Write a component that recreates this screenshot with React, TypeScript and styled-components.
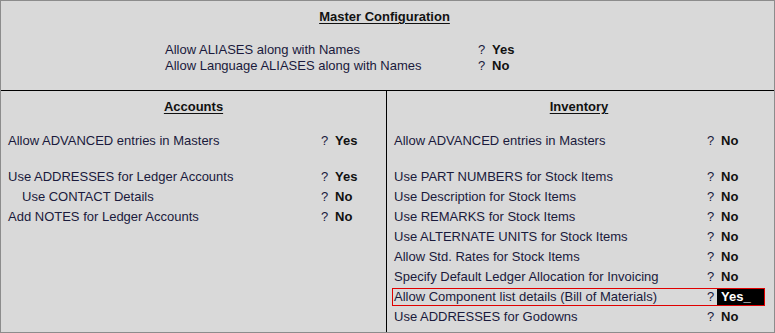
import React from 'react';
import styled, { createGlobalStyle } from 'styled-components';

const GlobalStyle = createGlobalStyle`
  html, body {
    margin: 0;
    padding: 0;
    background: #d9d9d9;
  }
`;

const Root = styled.div`
  width: 775px;
  height: 333px;
  box-sizing: border-box;
  border: 1px solid #8c8c8c;
  background: #d9d9d9;
  display: flex;
  flex-direction: column;
  font-family: 'Liberation Sans', Arial, sans-serif;
  font-size: 13px;
  color: #1a1a3c;
  overflow: hidden;
`;

const Header = styled.div`
  height: 81px;
  border-bottom: 1px solid #000;
  display: flex;
  flex-direction: column;
  padding-top: 8px;
  box-sizing: content-box;
`;

const Title = styled.div<{ $shift?: number }>`
  align-self: center;
  font-weight: bold;
  color: #111;
  line-height: 16px;
  text-decoration: underline;
  text-underline-offset: 2px;
  margin-right: ${(p) => p.$shift ?? 0}px;
`;

const HeaderRows = styled.div`
  margin-top: 17px;
  padding-left: 164px;
`;

const Body = styled.div`
  flex: 1;
  display: grid;
  grid-template-columns: 386px 1fr;
`;

const Column = styled.div<{ $divider?: boolean }>`
  display: flex;
  flex-direction: column;
  padding-top: 8px;
  border-right: ${(p) => (p.$divider ? '1px solid #000' : 'none')};
`;

const SectionTitle = styled(Title)`
  margin-bottom: 16px;
`;

const Row = styled.div<{ $active?: boolean }>`
  display: grid;
  grid-template-columns: 313px 10px 1fr;
  align-items: center;
  height: 18px;
  margin: 1px 9px 1px 5px;
  padding-left: 1px;
  border: 1px solid ${(p) => (p.$active ? '#e00000' : 'transparent')};
  box-sizing: border-box;
  line-height: 16px;
  white-space: nowrap;
`;

const HeaderRow = styled.div`
  display: grid;
  grid-template-columns: 313px 14px 1fr;
  height: 16px;
  line-height: 16px;
  white-space: nowrap;
`;

const Label = styled.span<{ $indent?: number }>`
  padding-left: ${(p) => p.$indent ?? 0}px;
`;

const Mark = styled.span``;

const Value = styled.span<{ $active?: boolean; $pad?: number }>`
  font-weight: bold;
  color: ${(p) => (p.$active ? '#fff' : '#111')};
  background: ${(p) => (p.$active ? '#000' : 'transparent')};
  padding-left: ${(p) => p.$pad ?? 4}px;
  align-self: stretch;
  display: flex;
  align-items: center;
`;

const Spacer = styled.div`
  height: 16px;
`;

type Item = { label: string; value: string; indent?: number; active?: boolean; gapBefore?: boolean };

const accounts: Item[] = [
  { label: 'Allow ADVANCED entries in Masters', value: 'Yes' },
  { label: 'Use ADDRESSES for Ledger Accounts', value: 'Yes', gapBefore: true },
  { label: 'Use CONTACT Details', value: 'No', indent: 14 },
  { label: 'Add NOTES for Ledger Accounts', value: 'No' },
];

const inventory: Item[] = [
  { label: 'Allow ADVANCED entries in Masters', value: 'No' },
  { label: 'Use PART NUMBERS for Stock Items', value: 'No', gapBefore: true },
  { label: 'Use Description for Stock Items', value: 'No' },
  { label: 'Use REMARKS for Stock Items', value: 'No' },
  { label: 'Use ALTERNATE UNITS for Stock Items', value: 'No' },
  { label: 'Allow Std. Rates for Stock Items', value: 'No' },
  { label: 'Specify Default Ledger Allocation for Invoicing', value: 'No' },
  { label: 'Allow Component list details (Bill of Materials)', value: 'Yes_', active: true },
  { label: 'Use ADDRESSES for Godowns', value: 'No' },
];

const renderItems = (items: Item[]) =>
  items.map((it) => (
    <React.Fragment key={it.label}>
      {it.gapBefore && <Spacer />}
      <Row $active={it.active}>
        <Label $indent={it.indent}>{it.label}</Label>
        <Mark>?</Mark>
        <Value $active={it.active}>{it.value}</Value>
      </Row>
    </React.Fragment>
  ));

export default function App() {
  return (
    <>
      <GlobalStyle />
      <Root>
        <Header>
          <Title $shift={6}>Master Configuration</Title>
          <HeaderRows>
            <HeaderRow>
              <Label>Allow ALIASES along with Names</Label>
              <Mark>?</Mark>
              <Value $pad={0}>Yes</Value>
            </HeaderRow>
            <HeaderRow>
              <Label>Allow Language ALIASES along with Names</Label>
              <Mark>?</Mark>
              <Value $pad={0}>No</Value>
            </HeaderRow>
          </HeaderRows>
        </Header>
        <Body>
          <Column $divider>
            <SectionTitle>Accounts</SectionTitle>
            {renderItems(accounts)}
          </Column>
          <Column>
            <SectionTitle $shift={3}>Inventory</SectionTitle>
            {renderItems(inventory)}
          </Column>
        </Body>
      </Root>
    </>
  );
}
